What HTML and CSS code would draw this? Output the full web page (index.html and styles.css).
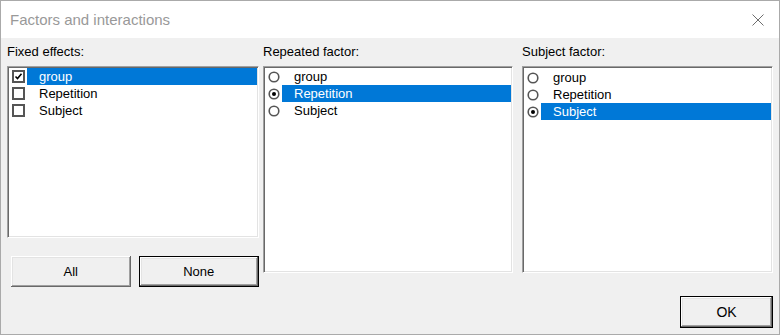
FILE: index.html
```html
<!DOCTYPE html>
<html lang="en">
<head>
  <meta charset="UTF-8" />
  <title>Factors and interactions</title>
  <link rel="stylesheet" href="styles.css">
</head>
<body>
  <div class="window">
    <div class="titlebar">
      <span class="title">Factors and interactions</span>
      <svg class="close" width="12" height="12" viewBox="0 0 12 12">
        <path d="M0.5 0.5 L11.5 11.5 M11.5 0.5 L0.5 11.5" stroke="#6e6e6e" stroke-width="1" fill="none" />
      </svg>
    </div>

    <div class="content">
      <div class="pane pane-fixed">
        <div class="label">Fixed effects:</div>
        <div class="list list-short">
          <div class="item">
            <svg class="check" width="13" height="13" viewBox="0 0 13 13">
              <rect x="1" y="1" width="11" height="11" fill="#fff" stroke="#555" stroke-width="2" />
              <path d="M3.5 6.5 L5.5 8.5 L9.5 3.8" stroke="#000" stroke-width="1.6" fill="none" />
            </svg>
            <span class="text selected">group</span>
          </div>
          <div class="item">
            <svg class="check" width="13" height="13" viewBox="0 0 13 13">
              <rect x="1" y="1" width="11" height="11" fill="#fff" stroke="#555" stroke-width="2" />
            </svg>
            <span class="text">Repetition</span>
          </div>
          <div class="item">
            <svg class="check" width="13" height="13" viewBox="0 0 13 13">
              <rect x="1" y="1" width="11" height="11" fill="#fff" stroke="#555" stroke-width="2" />
            </svg>
            <span class="text">Subject</span>
          </div>
        </div>
        <div class="buttons">
          <button type="button" class="btn btn-all">All</button>
          <button type="button" class="btn btn-default btn-none">None</button>
        </div>
      </div>

      <div class="pane pane-repeated">
        <div class="label">Repeated factor:</div>
        <div class="list">
          <div class="item">
            <svg class="radio" width="12" height="12" viewBox="0 0 12 12">
              <circle cx="6" cy="6" r="4.8" fill="#fff" stroke="#555" stroke-width="1.6" />
            </svg>
            <span class="text">group</span>
          </div>
          <div class="item">
            <svg class="radio" width="12" height="12" viewBox="0 0 12 12">
              <circle cx="6" cy="6" r="4.8" fill="#fff" stroke="#555" stroke-width="1.6" />
              <circle cx="6" cy="6" r="2" fill="#000" />
            </svg>
            <span class="text selected">Repetition</span>
          </div>
          <div class="item">
            <svg class="radio" width="12" height="12" viewBox="0 0 12 12">
              <circle cx="6" cy="6" r="4.8" fill="#fff" stroke="#555" stroke-width="1.6" />
            </svg>
            <span class="text">Subject</span>
          </div>
        </div>
      </div>

      <div class="pane pane-subject">
        <div class="label">Subject factor:</div>
        <div class="list list-offset">
          <div class="item">
            <svg class="radio" width="12" height="12" viewBox="0 0 12 12">
              <circle cx="6" cy="6" r="4.8" fill="#fff" stroke="#555" stroke-width="1.6" />
            </svg>
            <span class="text">group</span>
          </div>
          <div class="item">
            <svg class="radio" width="12" height="12" viewBox="0 0 12 12">
              <circle cx="6" cy="6" r="4.8" fill="#fff" stroke="#555" stroke-width="1.6" />
            </svg>
            <span class="text">Repetition</span>
          </div>
          <div class="item">
            <svg class="radio" width="12" height="12" viewBox="0 0 12 12">
              <circle cx="6" cy="6" r="4.8" fill="#fff" stroke="#555" stroke-width="1.6" />
              <circle cx="6" cy="6" r="2" fill="#000" />
            </svg>
            <span class="text selected">Subject</span>
          </div>
        </div>
      </div>
    </div>

    <div class="footer">
      <button type="button" class="btn btn-default btn-ok">OK</button>
    </div>
  </div>
</body>
</html>
```

FILE: styles.css
```css
* {
  box-sizing: border-box;
}
body {
  margin: 0;
  background-color: #f0f0f0;
  font-family: "Liberation Sans", Arial, sans-serif;
  font-size: 13px;
  color: #000;
}
.window {
  width: 780px;
  height: 335px;
  border: 1px solid #aaa;
  background-color: #f0f0f0;
  display: flex;
  flex-direction: column;
}
.titlebar {
  height: 37px;
  background-color: #fff;
  display: flex;
  align-items: center;
  padding: 0 15px 0 9px;
}
.title {
  flex: 1;
  font-size: 15px;
  color: #999;
}
.content {
  display: flex;
  padding: 6px 0 0 6px;
}
.pane-fixed {
  width: 252px;
}
.pane-repeated {
  width: 250px;
  margin-left: 4px;
}
.pane-subject {
  width: 251px;
  margin-left: 9px;
}
.label {
  height: 16px;
  line-height: 16px;
  margin-bottom: 6px;
}
.list {
  height: 207px;
  background-color: #fff;
  border-top: 1px solid #a0a0a0;
  border-left: 1px solid #a0a0a0;
  border-bottom: 1px solid #fff;
  border-right: 1px solid #fff;
  box-shadow: inset 1px 1px 0 #696969, inset -1px -1px 0 #e3e3e3;
  padding: 1px;
}
.list-short {
  height: 172px;
}
.list-offset {
  padding-top: 2px;
}
.item {
  height: 17px;
  display: flex;
  align-items: center;
}
.check, .radio {
  margin-left: 3px;
  margin-right: 2px;
  flex-shrink: 0;
}
.check {
  margin-top: -1px;
}
.text {
  flex: 1;
  height: 17px;
  line-height: 17px;
  padding-left: 12px;
}
.text.selected {
  background-color: #0078d7;
  color: #fff;
}
.buttons {
  display: flex;
  gap: 8px;
  margin-top: 18px;
  padding-left: 4px;
}
.btn {
  font-family: "Liberation Sans", Arial, sans-serif;
  font-size: 13px;
  color: #000;
  background-color: #f0f0f0;
  border: none;
  padding: 0;
  height: 31px;
  box-shadow: inset -1px -1px 0 #696969, inset 1px 1px 0 #fff, inset -2px -2px 0 #a0a0a0, inset 2px 2px 0 #e3e3e3;
}
.btn-all {
  width: 120px;
}
.btn-default {
  border: 1px solid #000;
}
.btn-none {
  width: 121px;
}
.footer {
  margin-top: auto;
  display: flex;
  justify-content: flex-end;
  padding: 0 6px 6px 0;
}
.btn-ok {
  width: 93px;
  height: 32px;
  font-size: 14px;
}
```
